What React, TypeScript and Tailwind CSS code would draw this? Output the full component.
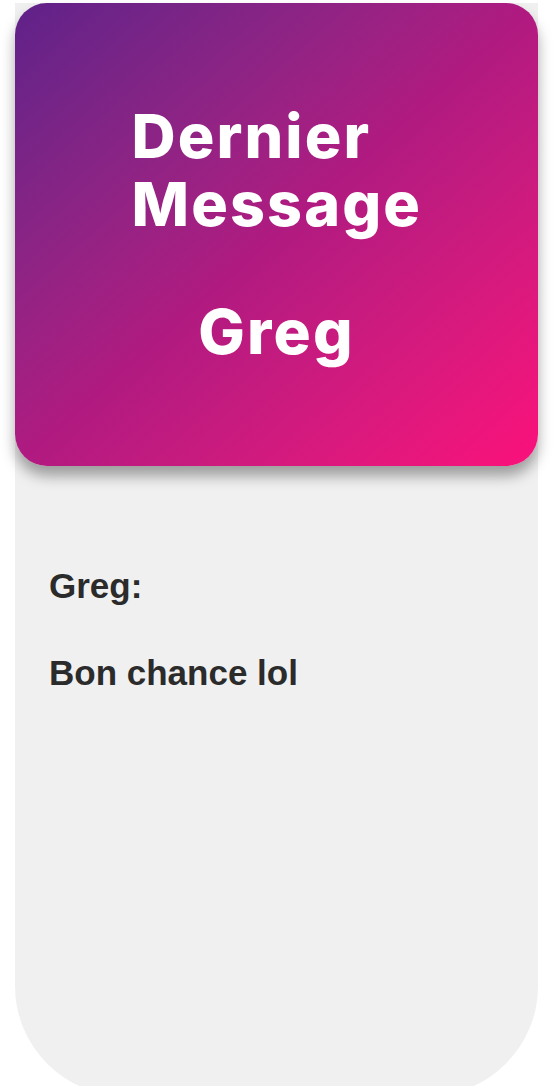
export default function App() {
  return (
    <div className="h-[1086px] overflow-hidden bg-white">
      <div className="mx-[15px] mt-[3px] h-[1093px] rounded-b-[110px] bg-[#f0f0f0]">
        {/* Header card */}
        <div className="flex h-[463px] flex-col items-center rounded-[32px] bg-gradient-to-br from-[#5f2189] via-[#b01a80] to-[#fb107a] pt-[99px] text-white shadow-[0_10px_14px_rgba(0,0,0,0.35)] [font-family:Inter,sans-serif]">
          <h1 className="w-[290px] text-left text-[61px] font-extrabold leading-[68px] tracking-[0.035em]">
            <span className="block">Dernier</span>
            <span className="block">Message</span>
          </h1>
          <p className="mt-[60px] text-[62px] font-extrabold leading-[68px] tracking-[0.035em]">Greg</p>
        </div>

        {/* Last message */}
        <div className="px-[34px] pt-[100px] text-[35px] font-bold text-[#2b2b2b] [font-family:'Liberation_Sans',Arial,sans-serif]">
          <p className="leading-[40px]">Greg:</p>
          <p className="mt-[47px] leading-[40px]">Bon chance lol</p>
        </div>
      </div>
    </div>
  );
}
